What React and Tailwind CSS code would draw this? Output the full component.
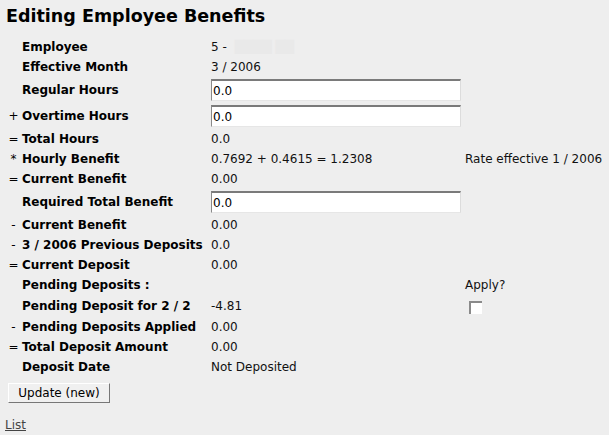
import React from 'react';

const font = { fontFamily: '"DejaVu Sans", Verdana, sans-serif' };

function Row({ sym, label, height = 'h-5', children, extra }) {
  return (
    <div className={`grid grid-cols-[17px_189px_254px_1fr] items-center ${height}`}>
      <div className="text-center text-[12px] text-black">{sym}</div>
      <div className="font-bold text-[12px] text-black whitespace-nowrap">{label}</div>
      <div className="text-[12px] text-[#111] whitespace-nowrap">{children}</div>
      <div className="text-[12px] text-[#111] whitespace-nowrap">{extra}</div>
    </div>
  );
}

function Field({ value }) {
  return (
    <input
      type="text"
      defaultValue={value}
      className="w-[250px] h-[22px] bg-white border-t-2 border-l border-r border-b border-t-[#7a7a7a] border-l-[#8a8a8a] border-r-[#dcdcdc] border-b-[#e6e6e6] pl-[1px] text-[12px] text-black outline-none"
      style={font}
    />
  );
}

export default function App() {
  return (
    <div className="min-h-[435px] w-[609px] bg-[#eeeeee] leading-none" style={font}>
      <div className="h-[37px] pl-[6px] pt-[5px]">
        <h1 className="font-bold text-[17.5px] text-black leading-[22px]">Editing Employee Benefits</h1>
      </div>

      <div className="pl-[5px]">
        <Row label="Employee">
          <span>5 -</span>
          <span className="ml-2 text-[#e9e9e9]">████ ██</span>
        </Row>
        <Row label="Effective Month">3 / 2006</Row>
        <Row label="Regular Hours" height="h-[26px]"><Field value="0.0" /></Row>
        <Row sym="+" label="Overtime Hours" height="h-[26px]"><Field value="0.0" /></Row>
        <Row sym="=" label="Total Hours">0.0</Row>
        <Row sym="*" label="Hourly Benefit" extra="Rate effective 1 / 2006">
          0.7692 + 0.4615 = 1.2308
        </Row>
        <Row sym="=" label="Current Benefit">0.00</Row>
        <Row label="Required Total Benefit" height="h-[26px]"><Field value="0.0" /></Row>
        <Row sym="-" label="Current Benefit">0.00</Row>
        <Row sym="-" label="3 / 2006 Previous Deposits">0.0</Row>
        <Row sym="=" label="Current Deposit">0.00</Row>
        <Row label="Pending Deposits :" extra="Apply?" />
        <Row
          label="Pending Deposit for 2 / 2"
          height="h-[22px]"
          extra={
            <div className="ml-[4px] mt-[2px] w-[13px] h-[13px] bg-white border-t-2 border-l-2 border-t-[#8a8a8a] border-l-[#8a8a8a]" />
          }
        >
          -4.81
        </Row>
        <Row sym="-" label="Pending Deposits Applied">0.00</Row>
        <Row sym="=" label="Total Deposit Amount">0.00</Row>
        <Row label="Deposit Date">Not Deposited</Row>
      </div>

      <div className="pl-[8px] pt-[6px]">
        <button
          className="w-[102px] h-[20px] bg-[#f0f0f0] border border-t-white border-l-white border-r-[#777] border-b-[#777] text-[12px] text-black"
          style={font}
        >
          Update (new)
        </button>
      </div>

      <div className="pl-[5px] pt-[13px]">
        <a href="#" className="text-[12px] text-[#444] underline">List</a>
      </div>
    </div>
  );
}
